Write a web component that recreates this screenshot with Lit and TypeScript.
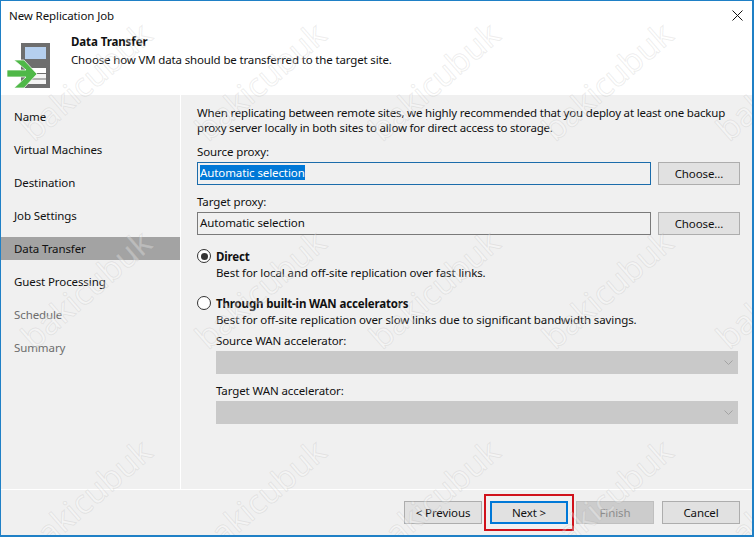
import { LitElement, html, css } from "lit";
import { customElement } from "lit/decorators.js";

const NAV = [
  ["Name", false], ["Virtual Machines", false], ["Destination", false], ["Job Settings", false],
  ["Data Transfer", false, true], ["Guest Processing", false], ["Schedule", true], ["Summary", true],
] as [string, boolean, boolean?][];

const MARKS: [number, number][] = [];
for (const y of [80, 288, 497]) for (const x of [85, 259, 433, 606, 780]) MARKS.push([x, y]);

@customElement("app-root")
export class AppRoot extends LitElement {
  static styles = css`
    :host { display: block; width: 754px; height: 537px; font-family: "Noto Sans", sans-serif; font-size: 11.5px; letter-spacing: -0.1px; color: #111; }
    .win { position: relative; box-sizing: border-box; width: 754px; height: 537px; border: 2px solid #1f80c6; border-width: 1px 2px 2px 1px; background: #f0f0f0; display: flex; flex-direction: column; overflow: hidden; }
    .top { background: #fff; height: 94px; flex: none; display: flex; flex-direction: column; }
    .title { height: 29px; display: flex; align-items: center; justify-content: space-between; padding: 0 9px 0 8px; }
    .head { display: flex; gap: 20px; padding-left: 6px; }
    .head svg { display: block; margin-top: 13px; }
    .head h1 { margin: 4px 0 0; font-size: 11.5px; font-weight: 700; line-height: 16px; }
    .head p { margin: 2px 0 0; line-height: 16px; letter-spacing: -0.15px; }
    .mid { flex: 1; display: flex; min-height: 0; }
    .nav { width: 179px; flex: none; padding-top: 10px; border-right: 1px solid #fff; }
    .nav div { height: 23px; line-height: 24px; padding-left: 13px; margin-bottom: 10px; }
    .nav .off { color: #6d6d6d; }
    .nav .on { background: #a3a3a3; }
    .main { flex: 1; padding: 10px 12px 0 16px; display: flex; flex-direction: column; }
    .intro { line-height: 15px; white-space: nowrap; letter-spacing: -0.19px; }
    label { display: block; line-height: 16px; }
    .row { display: flex; gap: 7px; margin-top: 2px; }
    .field { flex: 1; box-sizing: border-box; height: 23px; border: 1px solid #7a7a7a; background: #f0f0f0; padding-left: 2px; line-height: 20px; }
    .field.focus { border-color: #1b6cab; }
    .field mark { background: #0078d7; color: #fff; }
    button { font: inherit; letter-spacing: inherit; box-sizing: border-box; width: 78px; height: 23px; padding: 0; color: #111; background: #e1e1e1; border: 1px solid #adadad; }
    .row button { width: 82px; }
    .radio { display: flex; align-items: center; gap: 5px; font-weight: 700; line-height: 16px; letter-spacing: -0.15px; }
    .radio span { position: relative; top: 1px; }
    .radio i { width: 14px; height: 14px; box-sizing: border-box; border: 1px solid #333; border-radius: 50%; background: #fff; display: flex; align-items: center; justify-content: center; }
    .radio i b { width: 7px; height: 7px; border-radius: 50%; background: #333; }
    .desc { padding-left: 19px; line-height: 16px; margin-top: 1px; }
    .wan { padding-left: 19px; }
    .sel { box-sizing: border-box; width: 522px; height: 23px; background: #c9c9c9; margin-top: 2px; display: flex; align-items: center; justify-content: flex-end; padding-right: 5px; }
    .foot { flex: none; box-sizing: border-box; height: 46px; border-top: 1px solid #fff; display: flex; justify-content: flex-end; gap: 8px; padding: 11px 12px 0 0; }
    .foot .def { border: 2px solid #0078d7; }
    .foot .dis { background: #cccccc; border-color: #bfbfbf; color: #8c8c8c; }
    .red { position: absolute; left: 483px; top: 493px; width: 90px; height: 37px; box-sizing: border-box; border: 2px solid #d0121b; pointer-events: none; }
    .wm { position: absolute; font-size: 33px; letter-spacing: 0; font-weight: 400; color: rgba(255,255,255,.3); -webkit-text-stroke: 1px rgba(150,150,150,.17); transform: translate(-50%,-50%) rotate(-41deg); pointer-events: none; white-space: nowrap; }
  `;

  render() {
    const chevron = html`<svg width="9" height="5" viewBox="0 0 9 5"><path d="M.5.5l4 4 4-4" stroke="#a3a3a3" fill="none"/></svg>`;
    return html`<div class="win">
      <div class="top">
        <div class="title"><span>New Replication Job</span>
          <svg width="11" height="11" viewBox="0 0 11 11"><path d="M.5.5l10 10M10.5.5l-10 10" stroke="#111" fill="none"/></svg></div>
        <div class="head">
          <svg width="44" height="46" viewBox="0 0 44 46">
            <rect x="14" y="0" width="29" height="45" fill="#6e6e6e"/>
            <rect x="18" y="4" width="21" height="12" fill="#b5cfee"/>
            <rect x="18" y="25" width="21" height="5" fill="#fff"/>
            <rect x="18" y="31" width="21" height="4.5" fill="#f4f4f4"/>
            <rect x="18" y="36.5" width="21" height="4.5" fill="#f4f4f4"/>
            <path d="M7 17H17L30 31L17 45H7L19 34H0V27H19Z" fill="#4fb848" stroke="#fff" stroke-width=".7"/>
          </svg>
          <div><h1>Data Transfer</h1><p>Choose how VM data should be transferred to the target site.</p></div>
        </div>
      </div>
      <div class="mid">
        <div class="nav">${NAV.map(([t, off, on]) => html`<div class="${off ? "off" : on ? "on" : ""}">${t}</div>`)}</div>
        <div class="main">
          <div class="intro">When replicating between remote sites, we highly recommended that you deploy at least one backup<br>proxy server locally in both sites to allow for direct access to storage.</div>
          <label style="margin-top:9px">Source proxy:</label>
          <div class="row"><div class="field focus"><mark>Automatic selection</mark></div><button>Choose...</button></div>
          <label style="margin-top:9px">Target proxy:</label>
          <div class="row"><div class="field">Automatic selection</div><button>Choose...</button></div>
          <div class="radio" style="margin-top:13px"><i><b></b></i><span>Direct</span></div>
          <div class="desc">Best for local and off-site replication over fast links.</div>
          <div class="radio" style="margin-top:14px"><i></i><span>Through built-in WAN accelerators</span></div>
          <div class="desc">Best for off-site replication over slow links due to significant bandwidth savings.</div>
          <div class="wan">
            <label style="margin-top:5px">Source WAN accelerator:</label>
            <div class="sel">${chevron}</div>
            <label style="margin-top:9px">Target WAN accelerator:</label>
            <div class="sel">${chevron}</div>
          </div>
        </div>
      </div>
      <div class="foot"><button>&lt; Previous</button><button class="def">Next &gt;</button><button class="dis">Finish</button><button>Cancel</button></div>
      <div class="red"></div>
      ${MARKS.map(([x, y]) => html`<span class="wm" style="left:${x}px;top:${y}px">bakicubuk</span>`)}
    </div>`;
  }
}
